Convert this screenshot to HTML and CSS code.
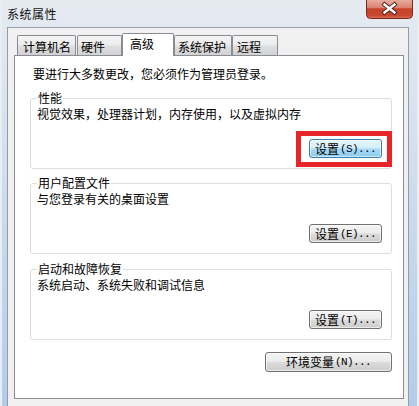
FILE: index.html
```html
<!DOCTYPE html>
<html lang="zh-CN">
<head>
<meta charset="utf-8">
<title>系统属性</title>
<link rel="stylesheet" href="styles.css">
</head>
<body>
<div class="window">
  <div class="titlebar">
    <div class="title">系统属性</div>
    <div class="close">
      <svg width="47" height="19" viewBox="0 0 47 19">
        <defs>
          <linearGradient id="cg" x1="0" y1="0" x2="0" y2="1">
            <stop offset="0" stop-color="#e9b1a3"/>
            <stop offset="0.45" stop-color="#d98270"/>
            <stop offset="0.5" stop-color="#c5432c"/>
            <stop offset="0.85" stop-color="#c9482f"/>
            <stop offset="1" stop-color="#e07a5c"/>
          </linearGradient>
        </defs>
        <path d="M0.5 -1 V14.5 Q0.5 18.5 4.5 18.5 H42.5 Q46.5 18.5 46.5 14.5 V-1 Z" fill="url(#cg)" stroke="#7a2a1d" stroke-width="1"/>
        <path d="M18.5 4.5 L28.5 12.5 M28.5 4.5 L18.5 12.5" stroke="#4a2019" stroke-width="4.2" stroke-linecap="square" fill="none"/>
        <path d="M18.5 4.5 L28.5 12.5 M28.5 4.5 L18.5 12.5" stroke="#ffffff" stroke-width="2.4" stroke-linecap="square" fill="none"/>
      </svg>
    </div>
  </div>
  <div class="client">
    <div class="tabs">
      <div class="tab t1">计算机名</div>
      <div class="tab t2">硬件</div>
      <div class="tab t3 active">高级</div>
      <div class="tab t4">系统保护</div>
      <div class="tab t5">远程</div>
    </div>
    <div class="panel">
      <div class="note">要进行大多数更改，您必须作为管理员登录。</div>
      <fieldset class="group">
        <legend>性能</legend>
        <div class="desc">视觉效果，处理器计划，内存使用，以及虚拟内存</div>
        <div class="btn-row">
          <div class="hl-wrap">
            <button class="btn btn-hot">设置<span class="mn">(S)...</span></button>
            <div class="redbox"></div>
          </div>
        </div>
      </fieldset>
      <fieldset class="group">
        <legend>用户配置文件</legend>
        <div class="desc">与您登录有关的桌面设置</div>
        <div class="btn-row">
          <button class="btn">设置<span class="mn">(E)...</span></button>
        </div>
      </fieldset>
      <fieldset class="group g3">
        <legend>启动和故障恢复</legend>
        <div class="desc">系统启动、系统失败和调试信息</div>
        <div class="btn-row">
          <button class="btn">设置<span class="mn">(T)...</span></button>
        </div>
      </fieldset>
      <div class="env-row">
        <button class="btn btn-env">环境变量<span class="mn">(N)...</span></button>
      </div>
    </div>
  </div>
</div>
</body>
</html>
```

FILE: styles.css
```css
html, body {
  margin: 0;
  padding: 0;
}
body {
  width: 419px;
  height: 406px;
  overflow: hidden;
  font-family: "Noto Sans CJK SC", "Noto Sans", sans-serif;
  font-size: 12px;
  line-height: 14px;
  color: #000;
}
.window {
  width: 419px;
  height: 406px;
  display: flex;
  flex-direction: column;
  background: linear-gradient(180deg, #e6ebf1 0%, #dce5ef 20%, #c6d8ec 60%, #b2cdea 100%);
  box-shadow: inset 2px 0 0 #e9eef4, inset -2px 0 0 #e9eef4;
}
.titlebar {
  height: 27px;
  display: flex;
  align-items: flex-start;
  padding-left: 7px;
  flex: none;
}
.title {
  margin-top: 7px;
  letter-spacing: 0.5px;
  color: #111;
}
.close {
  margin-left: auto;
  margin-right: 6px;
  width: 47px;
  height: 19px;
}
.close svg {
  display: block;
}
.client {
  flex: 1;
  margin: 0 10px 0 7px;
  background: #f0f0f0;
  border: 1px solid #939ca8;
  border-bottom: none;
  padding: 5px 4px 0 6px;
}
.tabs {
  display: flex;
  align-items: flex-end;
  height: 22px;
  padding-left: 3px;
}
.tab {
  box-sizing: border-box;
  height: 20px;
  border: 1px solid #898c95;
  border-bottom: none;
  border-radius: 2px 2px 0 0;
  background: linear-gradient(180deg, #f4f4f4 0%, #ececec 45%, #dedede 55%, #d2d2d2 100%);
  padding: 4px 0 0 4px;
  white-space: nowrap;
}
.t1 { width: 59px; padding-left: 5px; }
.t2 { width: 45px; margin-left: 1px; padding-left: 3px; }
.t3 { width: 52px; }
.t4 { width: 58px; padding-left: 3px; }
.t5 { width: 46px; padding-left: 4px; }
.tab.active {
  height: 23px;
  background: #fff;
  margin-bottom: -1px;
  padding: 3px 0 0 7px;
  position: relative;
  z-index: 1;
}
.panel {
  box-sizing: border-box;
  width: 390px;
  height: 344px;
  background: #fff;
  border: 1px solid #898c95;
  padding: 11px 11px 0 15px;
}
.note {
  padding-left: 3px;
  margin-bottom: 10px;
}
.group {
  margin: 7px 0 0 0;
  padding: 2px 9px 10px 6px;
  border: 1px solid #d5dfe5;
  border-radius: 3px;
  min-width: 0;
}
.group:first-of-type {
  margin-top: 0;
}
.g3 {
  margin-top: 8px;
}
.group legend {
  padding: 0 1px;
  line-height: 14px;
}
.btn-row {
  display: flex;
  justify-content: flex-end;
  margin-top: 18px;
}
.hl-wrap {
  position: relative;
}
.btn {
  box-sizing: border-box;
  width: 73px;
  height: 19px;
  margin: 0;
  padding: 0;
  font-family: "Noto Sans CJK SC", sans-serif;
  font-size: 12px;
  line-height: 14px;
  color: #000;
  border: 1px solid #707070;
  border-radius: 3px;
  background: linear-gradient(180deg, #f4f4f4 0%, #ebebeb 48%, #dbdbdb 52%, #cdcdcd 100%);
  box-shadow: inset 0 0 0 1px rgba(255,255,255,0.6);
  display: flex;
  align-items: center;
  justify-content: center;
}
.btn .mn {
  font-family: "Liberation Mono", monospace;
  font-size: 11px;
  letter-spacing: -0.6px;
  margin-left: 1px;
}
.btn-hot {
  border-color: #3c7fb1;
  background: linear-gradient(180deg, #e8f5fc 0%, #d4eefb 45%, #a9dbf6 52%, #8ccbee 100%);
  box-shadow: inset 0 0 0 1px rgba(255,255,255,0.55);
}
.redbox {
  position: absolute;
  left: -13px;
  top: -8px;
  width: 96px;
  height: 36px;
  box-sizing: border-box;
  border: 5px solid #e8262a;
}
.env-row {
  display: flex;
  justify-content: flex-end;
  margin-top: 12px;
}
.btn-env {
  width: 127px;
  height: 20px;
}
```
